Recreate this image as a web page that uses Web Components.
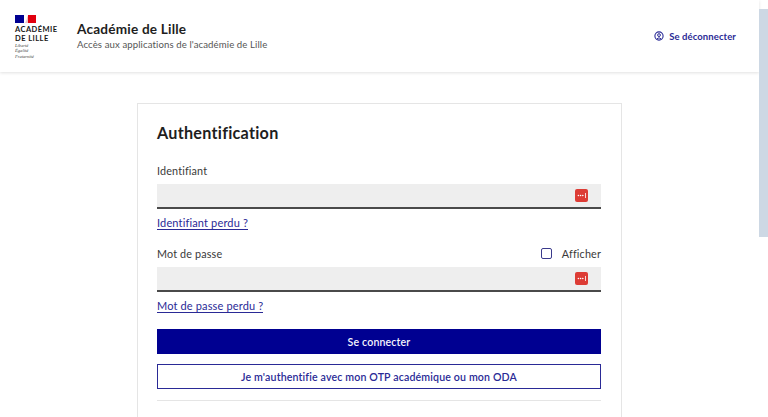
<!DOCTYPE html>
<html lang="fr">
<head>
<meta charset="utf-8">
<title>Authentification</title>
<style>
  html, body { margin: 0; height: 417px; overflow: hidden; background: #fff; }
  body { font-family: "Lato", "Liberation Sans", sans-serif; font-variant-ligatures: none; }
</style>
</head>
<body>
<aca-page>
  <aca-header slot="header"></aca-header>
  <aca-card>
    <h-title>Authentification</h-title>
    <aca-field label="Identifiant" link="Identifiant perdu ?"></aca-field>
    <aca-field label="Mot de passe" link="Mot de passe perdu ?" show></aca-field>
    <aca-button primary>Se connecter</aca-button>
    <aca-button>Je m'authentifie avec mon OTP académique ou mon ODA</aca-button>
    <aca-rule></aca-rule>
  </aca-card>
</aca-page>

<script>
class AcaPage extends HTMLElement {
  constructor() {
    super();
    this.attachShadow({ mode: "open" }).innerHTML = `
      <style>
        :host { display: block; position: relative; width: 768px; height: 417px; overflow: hidden; }
        .view { width: 759px; display: flex; flex-direction: column; align-items: center; }
        .head { align-self: stretch; }
        .bar { position: absolute; right: 0; top: 9px; width: 9px; height: 228px; background: #cdd8e4; }
      </style>
      <div class="view">
        <div class="head"><slot name="header"></slot></div>
        <slot></slot>
      </div>
      <div class="bar"></div>
    `;
  }
}

class AcaHeader extends HTMLElement {
  constructor() {
    super();
    this.attachShadow({ mode: "open" }).innerHTML = `
      <style>
        :host { display: flex; align-items: center; height: 72px; padding: 0 23px 0 15px; box-shadow: 0 1px 3px rgba(0,0,0,.12); background: #fff; position: relative; }
        .logo { width: 62px; display: flex; flex-direction: column; align-self: flex-start; padding-top: 15px; }
        .flag { display: block; }
        .name { font-size: 7.5px; line-height: 9px; font-weight: 700; color: #161616; margin-top: 1.5px; letter-spacing: .45px; }
        .motto { font-family: "Liberation Serif", serif; font-style: italic; font-size: 4.6px; line-height: 5.4px; color: #444; margin-top: .5px; }
        .titles { flex: 1; }
        .t { font-size: 13.6px; line-height: 18px; font-weight: 700; color: #1e1e1e; letter-spacing: .2px; }
        .s { font-size: 9.6px; line-height: 14px; color: #555; letter-spacing: .1px; }
        .out { display: flex; align-items: center; gap: 5px; font-size: 9.5px; font-weight: 700; color: #2a2a96; letter-spacing: .1px; }
      </style>
      <div class="logo">
        <svg class="flag" width="21" height="8" viewBox="0 0 21 8">
          <rect width="9" height="8" fill="#000091"/>
          <rect x="13" width="8" height="8" fill="#e1000f"/>
          <path d="M10 8 Q12 5 12 3 L13 0 V8Z" fill="#f0c4c4"/>
        </svg>
        <div class="name">ACADÉMIE<br>DE LILLE</div>
        <div class="motto">Liberté<br>Égalité<br>Fraternité</div>
      </div>
      <div class="titles">
        <div class="t">Académie de Lille</div>
        <div class="s">Accès aux applications de l'académie de Lille</div>
      </div>
      <div class="out">
        <svg width="10" height="10" viewBox="0 0 10 10" fill="none" stroke="#2a2a96">
          <circle cx="5" cy="5" r="4.1" stroke-width="1.1"/>
          <circle cx="5" cy="4.1" r="1.4" stroke-width="1"/>
          <path d="M2.6 8 Q5 5.6 7.4 8" stroke-width="1"/>
        </svg>
        <span>Se déconnecter</span>
      </div>
    `;
  }
}

class AcaCard extends HTMLElement {
  constructor() {
    super();
    this.attachShadow({ mode: "open" }).innerHTML = `
      <style>
        :host { display: flex; flex-direction: column; box-sizing: border-box; width: 485px; height: 400px; margin-top: 31px; padding: 19px 20px 0 19px; border: 1px solid #e5e5e5; background: #fff; }
      </style>
      <slot></slot>
    `;
  }
}

class HTitle extends HTMLElement {
  constructor() {
    super();
    this.attachShadow({ mode: "open" }).innerHTML = `
      <style>
        :host { display: block; font-size: 16.2px; line-height: 20px; font-weight: 700; color: #1e1e1e; margin-bottom: 19px; letter-spacing: .25px; }
      </style>
      <slot></slot>
    `;
  }
}

class AcaField extends HTMLElement {
  constructor() {
    super();
    const showBox = this.hasAttribute("show") ? `
      <label class="show"><span class="box"></span>Afficher</label>` : "";
    this.attachShadow({ mode: "open" }).innerHTML = `
      <style>
        :host { display: block; margin-bottom: 15px; }
        .top { display: flex; justify-content: space-between; align-items: center; height: 16px; font-size: 10.8px; color: #3a3a3a; margin-bottom: 6px; letter-spacing: .15px; }
        .show { display: flex; align-items: center; gap: 10px; }
        .box { width: 9px; height: 9px; border: 1px solid #3a3a8c; border-radius: 2px; }
        .input { box-sizing: border-box; height: 25px; background: #eee; border-bottom: 2px solid #4a4a4a; display: flex; align-items: center; justify-content: flex-end; padding: 0 13px 0 0; }
        .key { width: 13px; height: 13px; border-radius: 2px; background: #dd3c35; display: block; }
        a { display: inline-block; margin-top: 7px; font-size: 11px; line-height: 13px; color: #2a2a96; border-bottom: 1px solid #2a2a96; text-decoration: none; letter-spacing: .15px; }
      </style>
      <div class="top"><span>${this.getAttribute("label")}</span>${showBox}</div>
      <div class="input">
        <svg class="key" viewBox="0 0 13 13">
          <circle cx="3.4" cy="6.5" r=".8" fill="#fff"/>
          <circle cx="5.6" cy="6.5" r=".8" fill="#fff"/>
          <circle cx="7.8" cy="6.5" r=".8" fill="#fff"/>
          <rect x="10" y="4" width=".8" height="5" fill="#fff"/>
        </svg>
      </div>
      <a href="#">${this.getAttribute("link")}</a>
    `;
  }
}

class AcaButton extends HTMLElement {
  constructor() {
    super();
    this.attachShadow({ mode: "open" }).innerHTML = `
      <style>
        :host { display: flex; box-sizing: border-box; height: 25px; align-items: center; justify-content: center; font-size: 10.6px; font-weight: 600; color: #2a2a96; border: 1px solid #2a2a96; background: #fff; margin-bottom: 10px; letter-spacing: .15px; }
        :host([primary]) { background: #000091; border-color: #000091; color: #f5f5fe; margin-top: 1px; }
      </style>
      <slot></slot>
    `;
  }
}

class AcaRule extends HTMLElement {
  constructor() {
    super();
    this.attachShadow({ mode: "open" }).innerHTML = `
      <style>
        :host { display: block; height: 1px; margin-top: 1px; background: #e5e5e5; }
      </style>
    `;
  }
}

customElements.define("aca-page", AcaPage);
customElements.define("aca-header", AcaHeader);
customElements.define("aca-card", AcaCard);
customElements.define("h-title", HTitle);
customElements.define("aca-field", AcaField);
customElements.define("aca-button", AcaButton);
customElements.define("aca-rule", AcaRule);
</script>
</body>
</html>
